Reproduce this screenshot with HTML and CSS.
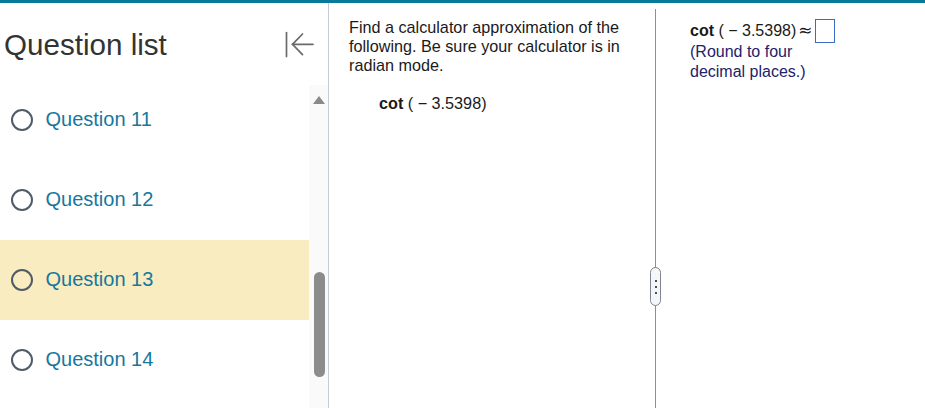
FILE: index.html
```html
<!DOCTYPE html>
<html>
<head>
<meta charset="utf-8">
<link rel="stylesheet" href="styles.css">
</head>
<body>
<div class="topbar"></div>
<div class="main">
  <aside class="sidebar">
    <div class="side-head">
      <h1 class="side-title">Question list</h1>
      <svg class="collapse" width="30" height="28" viewBox="0 0 30 28" fill="none" stroke="#6a6a6a" stroke-width="1.7" stroke-linecap="round">
        <line x1="2.5" y1="1.5" x2="2.5" y2="25.5"/>
        <line x1="8.5" y1="13.3" x2="29" y2="13.3"/>
        <polyline points="18.5,3 8.5,13.3 18.5,23.6"/>
      </svg>
    </div>
    <div class="side-body">
      <ul class="qlist">
        <li class="qrow"><span class="radio"></span><span class="qlabel">Question 11</span></li>
        <li class="qrow"><span class="radio"></span><span class="qlabel">Question 12</span></li>
        <li class="qrow current"><span class="radio"></span><span class="qlabel">Question 13</span></li>
        <li class="qrow"><span class="radio"></span><span class="qlabel">Question 14</span></li>
      </ul>
      <div class="scrolltrack">
        <div class="scroll-up"></div>
        <div class="scroll-thumb"></div>
      </div>
    </div>
  </aside>
  <section class="pane-left">
    <p class="prompt">Find a calculator approximation of the following. Be sure your calculator is in radian mode.</p>
    <p class="expr"><b>cot</b> ( − 3.5398)</p>
  </section>
  <div class="divider">
    <div class="handle"><span></span><span></span><span></span></div>
  </div>
  <section class="pane-right">
    <div class="answer-line"><b>cot</b> ( − 3.5398)<span class="approx">≈</span><span class="answer-box"></span></div>
    <div class="round-note">(Round to four decimal places.)</div>
  </section>
</div>
</body>
</html>
```

FILE: styles.css
```css
* { box-sizing: border-box; }
html, body {
  margin: 0;
  padding: 0;
  background: #fff;
  width: 925px;
  height: 408px;
  overflow: hidden;
  font-family: "Liberation Sans", Arial, sans-serif;
}
.topbar {
  height: 3px;
  background: #08799a;
}
.main {
  display: flex;
  height: 405px;
}
.sidebar {
  width: 329px;
  flex: none;
  border-right: 1px solid #c6cbd8;
  display: flex;
  flex-direction: column;
}
.side-head {
  height: 77px;
  flex: none;
  display: flex;
  align-items: flex-start;
}
.side-title {
  margin: 25px 0 0 4px;
  font-size: 29.6px;
  font-weight: normal;
  line-height: normal;
  color: #333;
}
.collapse {
  margin: 28px 14px 0 auto;
}
.side-body {
  flex: 1;
  display: flex;
  overflow: hidden;
}
.qlist {
  list-style: none;
  margin: 0;
  padding: 0;
  width: 309px;
  flex: none;
}
.qrow {
  height: 80px;
  display: flex;
  align-items: center;
  padding-left: 11px;
  padding-bottom: 1px;
}
.qrow.current {
  background: #f9ecc0;
}
.radio {
  width: 22px;
  height: 22px;
  border: 2.5px solid #515b67;
  border-radius: 50%;
  flex: none;
}
.qlabel {
  margin-left: 12.5px;
  font-size: 20px;
  color: #15789d;
}
.scrolltrack {
  width: 19px;
  flex: none;
  margin-top: 5px;
  background: #fafafa;
  padding-top: 11px;
  display: flex;
  flex-direction: column;
  align-items: center;
}
.scroll-up {
  width: 0;
  height: 0;
  border-left: 6.5px solid transparent;
  border-right: 6.5px solid transparent;
  border-bottom: 8px solid #8a8a8a;
}
.scroll-thumb {
  margin-top: 168px;
  width: 11px;
  height: 105px;
  border-radius: 6px;
  background: #8c8c8c;
  margin-left: 1px;
}
.pane-left {
  width: 326px;
  flex: none;
  padding: 15px 0 0 20px;
  color: #1a1a1a;
  font-size: 16.2px;
  line-height: 19.2px;
}
.prompt {
  margin: 0;
  width: 290px;
}
.expr {
  margin: 18px 0 0 30px;
}
.divider {
  width: 1px;
  flex: none;
  margin-top: 6px;
  background: #8e8e8e;
  position: relative;
}
.handle {
  position: absolute;
  left: -5px;
  top: 258px;
  width: 11px;
  height: 39px;
  border: 1px solid #7d8592;
  border-radius: 6px;
  background: #f5f6f9;
  display: flex;
  flex-direction: column;
  align-items: center;
  padding-top: 12px;
  gap: 4px;
}
.handle span {
  width: 2px;
  height: 2px;
  background: #5a4c3c;
}
.pane-right {
  flex: 1;
  padding: 16px 0 0 34px;
  font-size: 16px;
  line-height: 20px;
}
.answer-line {
  height: 23px;
  white-space: nowrap;
  color: #1a1a1a;
}
.approx {
  font-family: "DejaVu Sans", sans-serif;
  font-size: 17px;
  margin-left: 2px;
  line-height: 16px;
}
.answer-box {
  display: inline-block;
  width: 20px;
  height: 24px;
  border: 1.5px solid #3b6bc9;
  vertical-align: -7.5px;
  margin-left: 2px;
}
.round-note {
  width: 140px;
  color: #22226a;
}
```
